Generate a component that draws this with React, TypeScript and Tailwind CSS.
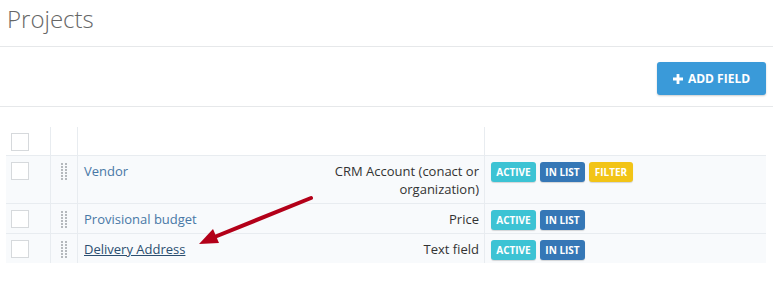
import React from "react";

interface Field {
  name: string;
  type: string[];
  filter?: boolean;
  hover?: boolean;
}

const fields: Field[] = [
  { name: "Vendor", type: ["CRM Account (conact or", "organization)"], filter: true },
  { name: "Provisional budget", type: ["Price"] },
  { name: "Delivery Address", type: ["Text field"], hover: true },
];

function Checkbox() {
  return <div className="w-[18px] h-[18px] border border-[#d6d9dc] bg-white" />;
}

function DragHandle() {
  return (
    <div className="self-start grid grid-cols-2 gap-x-[2px] gap-y-[1px] w-[6px]">
      {Array.from({ length: 12 }).map((_, i) => (
        <span key={i} className="block w-[2px] h-[2px] bg-[#b5b9bd]" />
      ))}
    </div>
  );
}

function Badge({ label, color }: { label: string; color: string }) {
  return (
    <span
      className={`inline-flex items-center justify-center h-[20px] rounded-[3px] text-[10px] font-bold text-white shadow-[0_1px_1px_rgba(0,0,0,0.15)] ${color}`}
    >
      {label}
    </span>
  );
}

export default function App() {
  return (
    <div className="relative w-[773px] h-[289px] bg-white font-['Open_Sans',sans-serif] overflow-hidden">
      <div className="h-[47px] border-b border-[#e6e8ea] px-[7px] pt-[3px]">
        <h1 className="text-[24px] font-light text-[#666] leading-[32px]">Projects</h1>
      </div>
      <div className="h-[60px] border-b border-[#e6e8ea] flex justify-end items-start pt-[15px] pr-[7px]">
        <button className="h-[33px] w-[109px] rounded-[3px] bg-[#3a9ad9] text-white text-[12px] font-bold flex items-center justify-center gap-[5px] shadow-[0_1px_2px_rgba(0,0,0,0.2)]">
          <svg width="10" height="10" viewBox="0 0 10 10">
            <path d="M3.6 0h2.8v3.6H10v2.8H6.4V10H3.6V6.4H0V3.6h3.6z" fill="white" />
          </svg>
          ADD FIELD
        </button>
      </div>
      <div className="pt-[20px] pl-[6px] pr-[7px]">
        <div className="flex h-[29px] border-b border-[#e8ecf0]">
          <div className="w-[45px] border-r border-[#e8ecf0] pl-[5px] pt-[6px]">
            <Checkbox />
          </div>
          <div className="w-[27px] border-r border-[#e8ecf0]" />
          <div className="w-[407px] border-r border-[#e8ecf0]" />
          <div className="flex-1" />
        </div>
        {fields.map((f) => (
          <div key={f.name} className="flex bg-[#f8fafc] border-b border-[#e8ecf0] last:border-b-0 text-[13px] leading-[18px]">
            <div className="w-[45px] border-r border-[#e8ecf0] pl-[5px] pt-[6px] pb-[5px]">
              <Checkbox />
            </div>
            <div className="w-[27px] border-r border-[#e8ecf0] flex justify-center items-start pt-[7px]">
              <DragHandle />
            </div>
            <div className="w-[407px] border-r border-[#e8ecf0] flex justify-between pl-[6px] pr-[5px] pt-[6px] pb-[5px]">
              <span className={f.hover ? "text-[#2b4e70] underline" : "text-[#4878a6]"}>{f.name}</span>
              <span className="text-right text-[#333]">
                {f.type.map((t) => (
                  <div key={t}>{t}</div>
                ))}
              </span>
            </div>
            <div className="flex-1 flex items-start gap-[4px] pl-[6px] pt-[6px]">
              <Badge label="ACTIVE" color="w-[45px] bg-[#3cc3d4]" />
              <Badge label="IN LIST" color="w-[45px] bg-[#3577b6]" />
              {f.filter && <Badge label="FILTER" color="w-[44px] bg-[#f2c417]" />}
            </div>
          </div>
        ))}
      </div>
      <svg className="absolute left-0 top-0 pointer-events-none" width="773" height="289">
        <line x1="311" y1="198" x2="212" y2="238" stroke="#b30019" strokeWidth="4" strokeLinecap="round" />
        <polygon points="199,244 213,229 219,243" fill="#b30019" />
      </svg>
    </div>
  );
}
